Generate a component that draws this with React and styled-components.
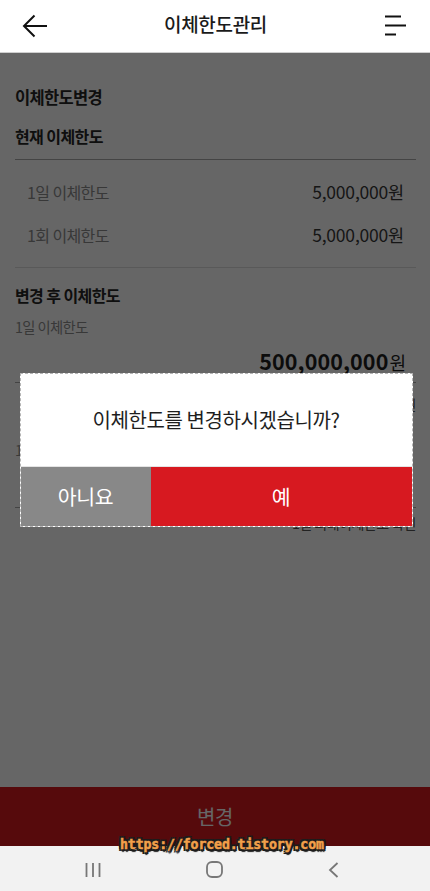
import React from "react";
import styled, { createGlobalStyle } from "styled-components";

const GlobalStyle = createGlobalStyle`
  * { box-sizing: border-box; }
  html, body { margin: 0; padding: 0; background: #ffffff; }
  body { font-family: "Noto Sans CJK KR", "Noto Sans", sans-serif; color: #222; }
`;

const Page = styled.div`
  position: relative;
  width: 430px;
  height: 891px;
  display: grid;
  grid-template-rows: 53px 1fr 59px 45px;
  overflow: hidden;
  background: #fff;
`;

const Header = styled.header`
  display: flex;
  align-items: center;
  justify-content: space-between;
  padding: 0 21px 0 22px;
  border-bottom: 1px solid #cfcfcf;
  background: #fff;
`;

const IconButton = styled.div`
  width: 26px;
  height: 24px;
  display: flex;
  align-items: center;
  justify-content: center;
`;

const Title = styled.h1`
  margin: 0;
  font-size: 19px;
  font-weight: 500;
  color: #1a1a1a;
  letter-spacing: -0.3px;
  line-height: 24px;
  padding-bottom: 4px;
`;

const Main = styled.main`
  display: flex;
  flex-direction: column;
  padding: 32px 14px 0 15px;
`;

const PageTitle = styled.h2`
  margin: 0;
  font-size: 16.5px;
  line-height: 24px;
  font-weight: 700;
  letter-spacing: -0.7px;
  color: #262626;
`;

const SectionTitle = styled.h3`
  margin: ${(p) => p.$top}px 0 0;
  font-size: 16px;
  line-height: 24px;
  font-weight: 700;
  letter-spacing: -0.6px;
  color: #262626;
`;

const Divider = styled.div`
  height: 1px;
  margin-top: ${(p) => p.$top}px;
  background: ${(p) => p.$color || "#aaaaaa"};
`;

const RowList = styled.div`
  display: flex;
  flex-direction: column;
  padding: 10px 12px 11px 12px;
`;

const Row = styled.div`
  height: 43px;
  display: flex;
  align-items: center;
  justify-content: space-between;
`;

const RowLabel = styled.span`
  font-size: 16px;
  letter-spacing: -0.6px;
  color: #8d8d8d;
`;

const RowValue = styled.span`
  font-size: 17.5px;
  letter-spacing: -0.2px;
  color: #383838;
`;

const SmallLabel = styled.div`
  margin-top: ${(p) => p.$top}px;
  font-size: 14.3px;
  line-height: 20px;
  letter-spacing: -0.6px;
  color: #8d8d8d;
`;

const Amount = styled.div`
  margin-top: 8px;
  padding-right: 10px;
  display: flex;
  justify-content: flex-end;
  align-items: baseline;
  line-height: 32px;
  color: #1f1f1f;
`;

const AmountNum = styled.span`
  font-size: 21.5px;
  font-weight: 700;
  letter-spacing: 0.1px;
`;

const AmountUnit = styled.span`
  font-size: 18px;
  margin-left: 1px;
`;

const Hint = styled.div`
  margin-top: ${(p) => p.$top}px;
  text-align: right;
  font-size: 14px;
  line-height: 20px;
  letter-spacing: -0.5px;
  color: #555;
`;

const BottomButton = styled.button`
  border: 0;
  margin: 0;
  background: #d71920;
  color: #ffffff;
  font-family: inherit;
  font-size: 20px;
  letter-spacing: -0.3px;
  padding-bottom: 2px;
`;

const NavBar = styled.nav`
  background: #f2f2f2;
  display: flex;
  align-items: center;
  gap: 105px;
  padding: 2px 0 0 85px;
`;

const Overlay = styled.div`
  position: absolute;
  left: 0;
  right: 0;
  top: 53px;
  bottom: 45px;
  background: rgba(0, 0, 0, 0.6);
  display: flex;
  align-items: center;
  justify-content: center;
  padding-top: 1px;
  padding-left: 2px;
`;

const Dialog = styled.div`
  width: 393px;
  border: 1px dashed #b5b5b5;
  background: #fff;
  display: flex;
  flex-direction: column;
`;

const Message = styled.p`
  margin: 0;
  height: 93px;
  display: flex;
  align-items: center;
  justify-content: center;
  font-size: 20px;
  letter-spacing: -0.4px;
  color: #1e1e1e;
  padding-bottom: 2px;
  border-bottom: 1px solid #e4e4e4;
`;

const ButtonRow = styled.div`
  display: grid;
  grid-template-columns: 130px 1fr;
  height: 59px;
`;

const DialogButton = styled.button`
  border: 0;
  margin: 0;
  background: ${(p) => (p.$primary ? "#d71920" : "#888888")};
  color: #fff;
  font-family: inherit;
  font-size: 20.5px;
  letter-spacing: -0.3px;
  padding-bottom: 2px;
`;

const Watermark = styled.div`
  position: absolute;
  left: 120px;
  top: 835px;
  font-family: "DejaVu Sans Mono", monospace;
  font-weight: 700;
  font-size: 13.2px;
  line-height: 20px;
  color: #f2a04a;
  -webkit-text-stroke: 0.5px #f2a04a;
  letter-spacing: -0.1px;
  text-shadow: -2px -2px 0 #1c1c1c, 2px -2px 0 #1c1c1c, -2px 2px 0 #1c1c1c,
    2px 2px 0 #1c1c1c, 0 2px 0 #1c1c1c, 0 -2px 0 #1c1c1c, 2px 0 0 #1c1c1c,
    -2px 0 0 #1c1c1c, 1px 3px 1px #1c1c1c;
`;

const BackIcon = () => (
  <svg width="26" height="24" viewBox="0 0 26 24" fill="none">
    <path d="M2 12H25" stroke="#111" strokeWidth="2" />
    <path d="M12.5 1.5L2 12L12.5 22.5" stroke="#111" strokeWidth="2" />
  </svg>
);

const MenuIcon = () => (
  <svg width="22" height="22" viewBox="0 0 22 22" fill="none">
    <path d="M0 1.5H16" stroke="#111" strokeWidth="2" />
    <path d="M0 10.5H21" stroke="#111" strokeWidth="2" />
    <path d="M0 19.5H11" stroke="#111" strokeWidth="2" />
  </svg>
);

const RecentIcon = () => (
  <svg width="16" height="16" viewBox="0 0 16 16" fill="none">
    <path d="M1.5 1V15M8 1V15M14.5 1V15" stroke="#777" strokeWidth="1.8" />
  </svg>
);

const HomeIcon = () => (
  <svg width="17" height="17" viewBox="0 0 17 17" fill="none">
    <rect x="1" y="1" width="15" height="15" rx="5" stroke="#777" strokeWidth="1.8" />
  </svg>
);

const NavBackIcon = () => (
  <svg width="11" height="16" viewBox="0 0 11 16" fill="none">
    <path d="M9.5 1L2 8L9.5 15" stroke="#777" strokeWidth="1.8" />
  </svg>
);

export default function App() {
  return (
    <>
      <GlobalStyle />
      <Page>
        <Header>
          <IconButton>
            <BackIcon />
          </IconButton>
          <Title>이체한도관리</Title>
          <IconButton>
            <MenuIcon />
          </IconButton>
        </Header>

        <Main>
          <PageTitle>이체한도변경</PageTitle>
          <SectionTitle $top={15}>현재 이체한도</SectionTitle>
          <Divider $top={11} />
          <RowList>
            <Row>
              <RowLabel>1일 이체한도</RowLabel>
              <RowValue>5,000,000원</RowValue>
            </Row>
            <Row>
              <RowLabel>1회 이체한도</RowLabel>
              <RowValue>5,000,000원</RowValue>
            </Row>
          </RowList>
          <Divider $top={0} $color="#dedede" />
          <SectionTitle $top={15}>변경 후 이체한도</SectionTitle>
          <SmallLabel $top={10}>1일 이체한도</SmallLabel>
          <Amount>
            <AmountNum>500,000,000</AmountNum>
            <AmountUnit>원</AmountUnit>
          </Amount>
          <Divider $top={4} />
          <Hint $top={11}>최대 500,000,000원</Hint>
          <SmallLabel $top={26}>1회 이체한도</SmallLabel>
          <Divider $top={47} />
          <Hint $top={5}>1일 최대이체한도 확인</Hint>
        </Main>

        <BottomButton>변경</BottomButton>

        <NavBar>
          <RecentIcon />
          <HomeIcon />
          <NavBackIcon />
        </NavBar>

        <Overlay>
          <Dialog>
            <Message>이체한도를 변경하시겠습니까?</Message>
            <ButtonRow>
              <DialogButton>아니요</DialogButton>
              <DialogButton $primary>예</DialogButton>
            </ButtonRow>
          </Dialog>
        </Overlay>

        <Watermark>https://forced.tistory.com</Watermark>
      </Page>
    </>
  );
}
